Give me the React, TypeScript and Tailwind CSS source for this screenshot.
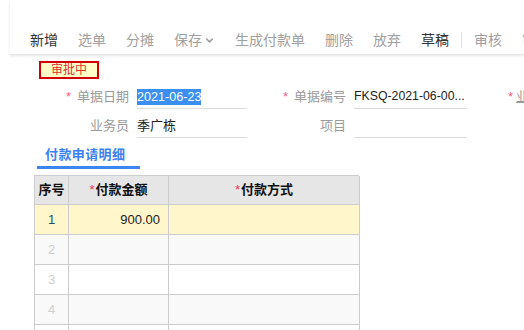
import React from 'react';
import { ChevronDown } from 'lucide-react';

const font = { fontFamily: '"Liberation Sans", "Noto Sans CJK SC", sans-serif' };

type ToolItem = { label: string; dark?: boolean; caret?: boolean; sep?: boolean };

const tools: ToolItem[] = [
  { label: '新增', dark: true },
  { label: '选单' },
  { label: '分摊' },
  { label: '保存', caret: true },
  { label: '生成付款单' },
  { label: '删除' },
  { label: '放弃' },
  { label: '草稿', dark: true, sep: true },
  { label: '审核' },
  { label: '审批' },
];

function Field({
  label,
  required,
  labelWidth,
  valueWidth,
  children,
}: {
  label: string;
  required?: boolean;
  labelWidth: string;
  valueWidth: string;
  children?: React.ReactNode;
}) {
  return (
    <div className="flex items-end h-[29px]">
      <div className={`${labelWidth} h-[24px] flex items-center justify-end text-[13px] text-[#9a9a9a]`}>
        {required && <span className="text-[#f0608a] mr-[6px]">*</span>}
        <span>{label}</span>
      </div>
      <div className={`${valueWidth} ml-[8px] h-[24px] flex items-center border-b border-[#dcdcdc] text-[13px] text-[#222] whitespace-nowrap overflow-hidden`}>
        {children}
      </div>
    </div>
  );
}

const rows = [
  { n: '1', amount: '900.00', bg: 'bg-[#fff6cc]', numColor: 'text-[#1f4f6e]' },
  { n: '2', amount: '', bg: 'bg-[#f9f9f9]', numColor: 'text-[#cfcfcf]' },
  { n: '3', amount: '', bg: 'bg-white', numColor: 'text-[#cfcfcf]' },
  { n: '4', amount: '', bg: 'bg-[#f9f9f9]', numColor: 'text-[#cfcfcf]' },
  { n: '5', amount: '', bg: 'bg-white', numColor: 'text-[#cfcfcf]' },
];

export default function App() {
  return (
    <div className="w-[524px] h-[330px] overflow-hidden bg-white" style={font}>
      {/* toolbar */}
      <div className="ml-[10px] h-[55px] pt-[25px] border-b border-[#e6e6e6] shadow-[0_1px_3px_rgba(0,0,0,0.10)]">
        <div className="h-[30px] pl-[20px] flex items-center gap-[20px] text-[14px] whitespace-nowrap">
          {tools.map((t) => (
            <React.Fragment key={t.label}>
              <span className={`flex items-center shrink-0 ${t.dark ? 'text-[#333]' : 'text-[#a0a0a0]'}`}>
                {t.label}
                {t.caret && <ChevronDown className="w-[11px] h-[11px] ml-[2px]" strokeWidth={3.5} />}
              </span>
              {t.sep && <span className="w-px h-[16px] bg-[#dde3ee] -mx-[8px] shrink-0" />}
            </React.Fragment>
          ))}
        </div>
      </div>

      {/* status */}
      <div className="ml-[39px] mt-[6px] w-[60px] h-[18px] border-2 border-[#d40000] bg-[#ffffc8] flex items-center justify-center text-[12px] text-[#e03030]">
        审批中
      </div>

      {/* form */}
      <div className="mt-px">
        <div className="flex">
          <Field label="单据日期" required labelWidth="w-[129px]" valueWidth="w-[110px]">
            <span className="bg-[#3a8ff0] text-white leading-[16px] text-[12.6px]">2021-06-23</span>
          </Field>
          <Field label="单据编号" required labelWidth="w-[99px]" valueWidth="w-[113px]">
            <span className="text-[12.3px]">FKSQ-2021-06-00...</span>
          </Field>
          <div className="flex items-end h-[29px] ml-[41px]">
            <div className="h-[24px] flex items-center text-[13px] text-[#9a9a9a] whitespace-nowrap">
              <span className="text-[#f0608a] mr-[3px]">*</span>
              <span className="underline">业务类型</span>
            </div>
          </div>
        </div>
        <div className="flex">
          <Field label="业务员" labelWidth="w-[129px]" valueWidth="w-[110px]">
            季广栋
          </Field>
          <Field label="项目" labelWidth="w-[99px]" valueWidth="w-[113px]" />
        </div>
      </div>

      {/* tab */}
      <div className="ml-[37px] mt-px w-[103px] pt-[7px] pl-[8px] pb-[3px] border-b-[3px] border-[#3d86f2] text-[13px] leading-[17px] font-bold text-[#3d80f0] tracking-[0.4px]">
        付款申请明细
      </div>

      {/* table */}
      <div className="ml-[34px] mt-[6px] w-[325px] grid grid-cols-[34px_100px_191px] border-l border-t border-[#cccccc] text-[13px]">
        <div className="h-[29px] bg-[#e6e6e6] border-r border-b border-[#cccccc] flex items-center justify-center font-bold text-[#111]">序号</div>
        <div className="h-[29px] bg-[#e6e6e6] border-r border-b border-[#cccccc] flex items-center justify-center font-bold text-[#111]">
          <span className="text-[#f0304a] font-normal mr-px">*</span>付款金额
        </div>
        <div className="h-[29px] bg-[#e6e6e6] border-r border-b border-[#cccccc] flex items-center justify-center font-bold text-[#111]">
          <span className="text-[#f0304a] font-normal mr-px">*</span>付款方式
        </div>
        {rows.map((r) => (
          <React.Fragment key={r.n}>
            <div className={`h-[30px] ${r.bg} border-r border-b border-[#cccccc] flex items-center justify-center ${r.numColor}`}>{r.n}</div>
            <div className={`h-[30px] ${r.bg} border-r border-b border-[#cccccc] flex items-center justify-end pr-[8px] text-[#222]`}>{r.amount}</div>
            <div className={`h-[30px] ${r.bg} border-r border-b border-[#cccccc]`} />
          </React.Fragment>
        ))}
      </div>
    </div>
  );
}
